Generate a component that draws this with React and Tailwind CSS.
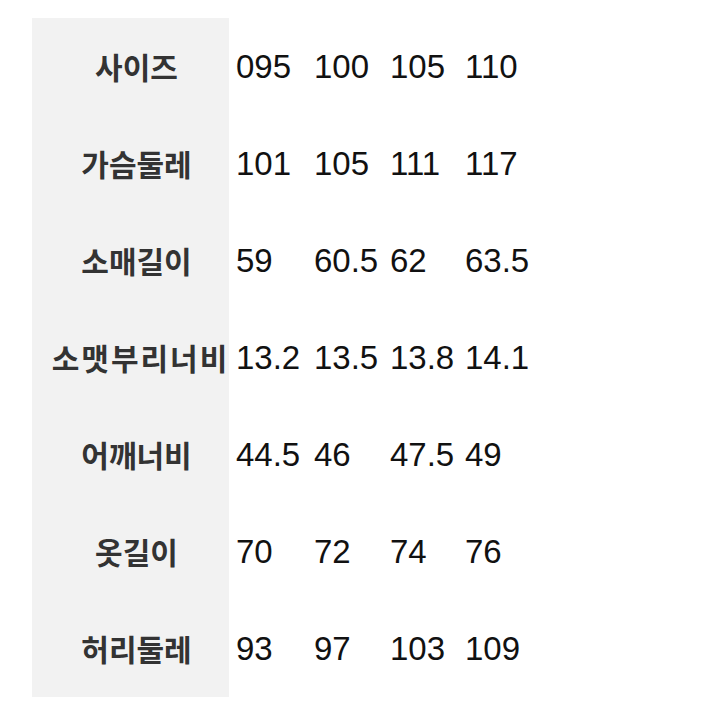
import React from "react";

const rows = [
  ["사이즈", "095", "100", "105", "110"],
  ["가슴둘레", "101", "105", "111", "117"],
  ["소매길이", "59", "60.5", "62", "63.5"],
  ["소맷부리너비", "13.2", "13.5", "13.8", "14.1"],
  ["어깨너비", "44.5", "46", "47.5", "49"],
  ["옷길이", "70", "72", "74", "76"],
  ["허리둘레", "93", "97", "103", "109"],
];

const colWidths = ["w-[78px]", "w-[76px]", "w-[75px]", "w-[75px]"];

export default function App() {
  return (
    <div className="w-[720px] h-[720px] bg-white pt-[18px] pl-[32px]">
      <div className="flex flex-col">
        {rows.map(([label, ...values]) => (
          <div key={label} className="flex h-[97px]">
            <div
              className={
                "w-[197px] bg-[#f2f2f2] flex items-center justify-center text-[30px] font-bold text-[#333333] whitespace-nowrap " +
                (label.length > 5 ? "pl-[20px] tracking-[2px]" : "pl-[12px]")
              }
              style={{ fontFamily: '"Noto Sans CJK KR", sans-serif' }}
            >
              {label}
            </div>
            <div
              className="flex items-center pl-[7px] text-[33px] text-[#111111]"
              style={{ fontFamily: '"Liberation Sans", Arial, sans-serif' }}
            >
              {values.map((v, i) => (
                <span key={i} className={colWidths[i] + " whitespace-nowrap"}>
                  {v}
                </span>
              ))}
            </div>
          </div>
        ))}
      </div>
    </div>
  );
}
